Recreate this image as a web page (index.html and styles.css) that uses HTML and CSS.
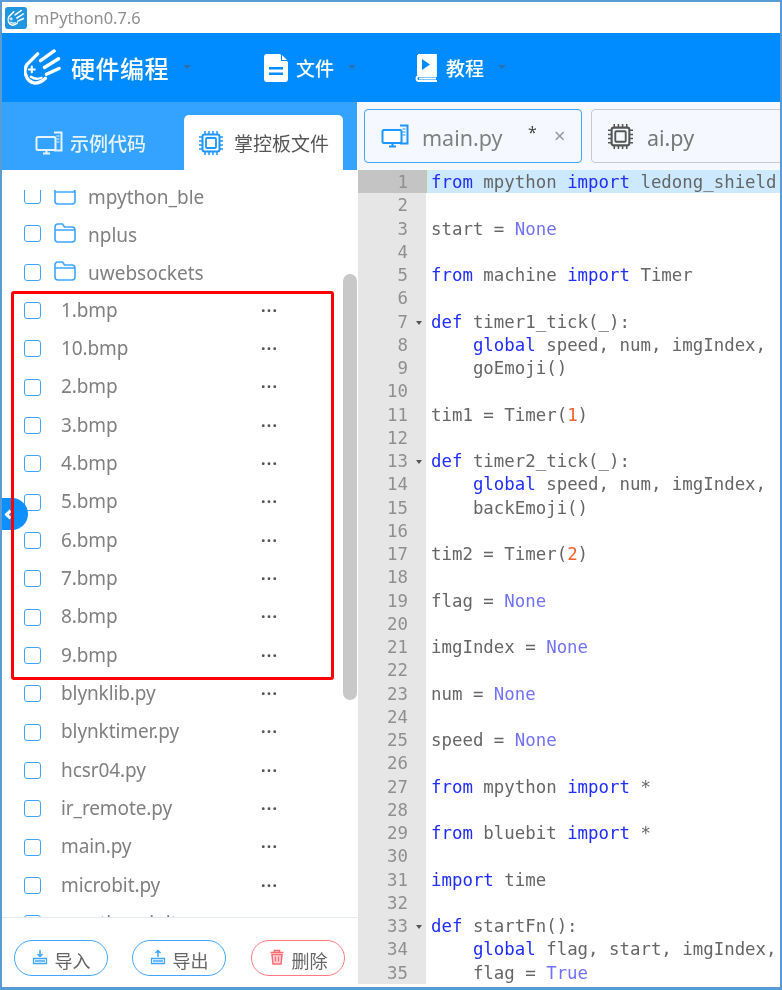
FILE: index.html
```html
<!DOCTYPE html>
<html lang="zh">
<head>
<meta charset="utf-8">
<title>mPython0.7.6</title>
<link rel="stylesheet" href="styles.css">
</head>
<body>
<svg class="defs" width="0" height="0">
  <defs>
    <symbol id="pc" viewBox="0 0 28 24">
      <path d="M19 1.5h7.5v18H19" fill="none" stroke="currentColor" stroke-width="2"/>
      <path d="M21.5 5h3M21.5 8h3M21.5 11h3" stroke="currentColor" stroke-width="1.2"/>
      <rect x="1.5" y="6" width="19" height="13" rx="1.5" fill="var(--pc-fill,none)" stroke="currentColor" stroke-width="2"/>
      <path d="M8 22.5h7M11.5 19v3" stroke="currentColor" stroke-width="2"/>
    </symbol>
    <symbol id="chip" viewBox="0 0 24 24">
      <rect x="3.5" y="3.5" width="17" height="17" rx="2" fill="none" stroke="currentColor" stroke-width="2"/>
      <rect x="7" y="7" width="10" height="10" rx="1" fill="none" stroke="currentColor" stroke-width="1.8"/>
      <path d="M6 0v3M10 0v3M14 0v3M18 0v3M6 21v3M10 21v3M14 21v3M18 21v3M0 6h3M0 10h3M0 14h3M0 18h3M21 6h3M21 10h3M21 14h3M21 18h3" stroke="currentColor" stroke-width="1.5"/>
    </symbol>
    <symbol id="folder" viewBox="0 0 22 20">
      <path d="M1 4.5Q1 1 4 1h4.5l2 3H18q3 0 3 3v9q0 3-3 3H4q-3 0-3-3z M1 7h20" fill="none" stroke="currentColor" stroke-width="1.6"/>
    </symbol>
    <symbol id="logo" viewBox="0 0 38 38">
      <g fill="none" stroke="currentColor" stroke-width="3.400" stroke-linecap="round">
        <path d="M17 12L31 2M21 19L35.500 10M23 26L36 20"/>
        <path d="M14 5L3 16Q0 21 1.500 26Q4 34 11 35Q17 35 22 30"/>
        <path d="M5 21h6M8 18v6" stroke-width="2.200"/>
        <path d="M7 28.500Q12 32 18 29.500" stroke-width="2.400"/>
      </g>
    </symbol>
    <symbol id="impbox" viewBox="0 0 16 16">
      <path d="M1.5 9.5h13v5h-13zM3 12h10" fill="none" stroke="currentColor" stroke-width="1.3"/>
    </symbol>
  </defs>
</svg>

<div class="app">
  <div class="titlebar">
    <svg class="title-icon" viewBox="0 0 22 22"><rect width="22" height="22" rx="3" fill="#2196e0"/><use href="#logo" x="2.5" y="2.5" width="17" height="17" color="#fff"/></svg>
    <span class="title-text">mPython0.7.6</span>
  </div>

  <header class="menubar">
    <div class="menu menu-brand">
      <svg class="brand-logo"><use href="#logo"/></svg>
      <span class="brand-name">硬件编程</span><i class="caret"></i>
    </div>
    <div class="menu menu-file">
      <svg class="menu-icon" viewBox="0 0 24 28"><path d="M3 0h13l8 8v17q0 3-3 3H3q-3 0-3-3V3q0-3 3-3z" fill="#fff"/><path d="M17 0l7 7h-7z" fill="#008cff"/><path d="M18 1l5 5h-5z" fill="#fff"/><path d="M5 13h14v2.400H5zM5 18.500h14v2.400H5z" fill="#008cff"/></svg>
      <span class="menu-label">文件</span><i class="caret"></i>
    </div>
    <div class="menu menu-tut">
      <svg class="menu-icon" viewBox="0 0 24 28"><path d="M4 0h18v22H5q-2.500 0-2.500 2.500T5 27h18" fill="none" stroke="#fff" stroke-width="1.800"/><path d="M3 1h19v20H3z" fill="#fff"/><path d="M8 5l8 5.500L8 16z" fill="#008cff"/><path d="M5 23.500h17v2H5z" fill="#fff"/></svg>
      <span class="menu-label">教程</span><i class="caret"></i>
    </div>
  </header>

  <div class="workspace">
    <aside class="sidebar">
      <div class="side-tabs">
        <div class="side-tab">
          <svg class="side-tab-icon"><use href="#pc"/></svg><span>示例代码</span>
        </div>
        <div class="side-tab side-tab-active">
          <svg class="side-tab-icon-chip"><use href="#chip"/></svg><span>掌控板文件</span>
        </div>
      </div>
      <div class="file-list">
        <ul class="files">
          <li class="file"><i class="check"></i><svg class="folder"><use href="#folder"/></svg><span class="folder-name">mpython_ble</span></li>
          <li class="file"><i class="check"></i><svg class="folder"><use href="#folder"/></svg><span class="folder-name">nplus</span></li>
          <li class="file"><i class="check"></i><svg class="folder"><use href="#folder"/></svg><span class="folder-name">uwebsockets</span></li>
          <li class="file"><i class="check"></i><span class="name">1.bmp</span><span class="more">···</span></li>
          <li class="file"><i class="check"></i><span class="name">10.bmp</span><span class="more">···</span></li>
          <li class="file"><i class="check"></i><span class="name">2.bmp</span><span class="more">···</span></li>
          <li class="file"><i class="check"></i><span class="name">3.bmp</span><span class="more">···</span></li>
          <li class="file"><i class="check"></i><span class="name">4.bmp</span><span class="more">···</span></li>
          <li class="file"><i class="check"></i><span class="name">5.bmp</span><span class="more">···</span></li>
          <li class="file"><i class="check"></i><span class="name">6.bmp</span><span class="more">···</span></li>
          <li class="file"><i class="check"></i><span class="name">7.bmp</span><span class="more">···</span></li>
          <li class="file"><i class="check"></i><span class="name">8.bmp</span><span class="more">···</span></li>
          <li class="file"><i class="check"></i><span class="name">9.bmp</span><span class="more">···</span></li>
          <li class="file"><i class="check"></i><span class="name">blynklib.py</span><span class="more">···</span></li>
          <li class="file"><i class="check"></i><span class="name">blynktimer.py</span><span class="more">···</span></li>
          <li class="file"><i class="check"></i><span class="name">hcsr04.py</span><span class="more">···</span></li>
          <li class="file"><i class="check"></i><span class="name">ir_remote.py</span><span class="more">···</span></li>
          <li class="file"><i class="check"></i><span class="name">main.py</span><span class="more">···</span></li>
          <li class="file"><i class="check"></i><span class="name">microbit.py</span><span class="more">···</span></li>
          <li class="file"><i class="check"></i><span class="name">mpython_init.py</span><span class="more">···</span></li>
        </ul>
        <div class="scrollbar"></div>
      </div>
      <div class="actions">
        <button class="pill"><svg class="pill-icon" viewBox="0 0 16 16"><use href="#impbox"/><path d="M8 1v6M5.500 5L8 7.500 10.500 5" fill="none" stroke="currentColor" stroke-width="1.500"/></svg><span>导入</span></button>
        <button class="pill"><svg class="pill-icon" viewBox="0 0 16 16"><use href="#impbox"/><path d="M8 8V2M5.500 4L8 1.500 10.500 4" fill="none" stroke="currentColor" stroke-width="1.500"/></svg><span>导出</span></button>
        <button class="pill pill-danger"><svg class="pill-icon" viewBox="0 0 16 16"><path d="M1.500 3.500h13M5.500 3V1.500h5V3" fill="none" stroke="currentColor" stroke-width="1.600"/><path d="M3 5.500h10L12 15H4z" fill="#ffd5d8" stroke="currentColor" stroke-width="1.500"/><path d="M6.500 7.500v5M9.500 7.500v5" stroke="currentColor" stroke-width="1.300"/></svg><span>删除</span></button>
      </div>
    </aside>

    <main class="editor">
      <div class="doc-tabs">
        <div class="doc-tab doc-tab-active">
          <svg class="doc-icon"><use href="#pc"/></svg>
          <span class="doc-name">main.py</span><span class="doc-star">*</span><span class="doc-close">×</span>
        </div>
        <div class="doc-tab">
          <svg class="doc-icon-chip"><use href="#chip"/></svg>
          <span class="doc-name">ai.py</span><span class="doc-star"></span><span class="doc-close">×</span>
        </div>
      </div>
      <div class="code">
        <div class="ln ln-active"><b class="num">1</b><code><k>from</k> mpython <k>import</k> ledong_shield</code></div>
        <div class="ln"><b class="num">2</b><code></code></div>
        <div class="ln"><b class="num">3</b><code>start = <c>None</c></code></div>
        <div class="ln"><b class="num">4</b><code></code></div>
        <div class="ln"><b class="num">5</b><code><k>from</k> machine <k>import</k> Timer</code></div>
        <div class="ln"><b class="num">6</b><code></code></div>
        <div class="ln"><b class="num fold">7</b><code><k>def</k> timer1_tick(_):</code></div>
        <div class="ln"><b class="num">8</b><code>    <k>global</k> speed, num, imgIndex, </code></div>
        <div class="ln"><b class="num">9</b><code>    goEmoji()</code></div>
        <div class="ln"><b class="num">10</b><code></code></div>
        <div class="ln"><b class="num">11</b><code>tim1 = Timer(<n>1</n>)</code></div>
        <div class="ln"><b class="num">12</b><code></code></div>
        <div class="ln"><b class="num fold">13</b><code><k>def</k> timer2_tick(_):</code></div>
        <div class="ln"><b class="num">14</b><code>    <k>global</k> speed, num, imgIndex, </code></div>
        <div class="ln"><b class="num">15</b><code>    backEmoji()</code></div>
        <div class="ln"><b class="num">16</b><code></code></div>
        <div class="ln"><b class="num">17</b><code>tim2 = Timer(<n>2</n>)</code></div>
        <div class="ln"><b class="num">18</b><code></code></div>
        <div class="ln"><b class="num">19</b><code>flag = <c>None</c></code></div>
        <div class="ln"><b class="num">20</b><code></code></div>
        <div class="ln"><b class="num">21</b><code>imgIndex = <c>None</c></code></div>
        <div class="ln"><b class="num">22</b><code></code></div>
        <div class="ln"><b class="num">23</b><code>num = <c>None</c></code></div>
        <div class="ln"><b class="num">24</b><code></code></div>
        <div class="ln"><b class="num">25</b><code>speed = <c>None</c></code></div>
        <div class="ln"><b class="num">26</b><code></code></div>
        <div class="ln"><b class="num">27</b><code><k>from</k> mpython <k>import</k> *</code></div>
        <div class="ln"><b class="num">28</b><code></code></div>
        <div class="ln"><b class="num">29</b><code><k>from</k> bluebit <k>import</k> *</code></div>
        <div class="ln"><b class="num">30</b><code></code></div>
        <div class="ln"><b class="num">31</b><code><k>import</k> time</code></div>
        <div class="ln"><b class="num">32</b><code></code></div>
        <div class="ln"><b class="num fold">33</b><code><k>def</k> startFn():</code></div>
        <div class="ln"><b class="num">34</b><code>    <k>global</k> flag, start, imgIndex, </code></div>
        <div class="ln"><b class="num">35</b><code>    flag = <c>True</c></code></div>
      </div>
    </main>
  </div>

  <div class="collapse-btn"><i class="collapse-arrow"></i></div>
  <div class="highlight-box"></div>
</div>
</body>
</html>
```

FILE: styles.css
```css
* { box-sizing: border-box; }
html, body { margin: 0; padding: 0; height: 100%; overflow: hidden; background: #fff; }
.defs { position: absolute; }
body { font-family: "Noto Sans", "Noto Sans CJK SC", sans-serif; }

.app {
  position: relative;
  width: 782px;
  height: 990px;
  border: 2px solid #5b9bd5;
  border-bottom-width: 3px;
  display: flex;
  flex-direction: column;
  overflow: hidden;
  background: #fff;
  filter: blur(0.35px);
}

.titlebar { height: 31px; display: flex; align-items: center; padding-left: 3px; background: #fff; flex: none; }
.title-icon { width: 22px; height: 22px; margin-right: 7px; }
.title-text { font-size: 16.400px; color: #8f8f8f; }

.menubar { height: 69px; flex: none; background: #008cff; display: flex; align-items: center; color: #fff; }
.menu { display: flex; align-items: center; }
.menu-brand { margin-left: 22px; width: 240px; }
.menu-file { width: 150px; }
.brand-logo { width: 37px; height: 37px; color: #fff; margin-right: 10px; }
.brand-name { font-size: 24px; font-family: "Noto Sans CJK SC", sans-serif; font-weight: 500; letter-spacing: 0.5px; line-height: 30px; }
.menu-icon { width: 24px; height: 28px; margin-right: 8px; }
.menu-label { font-size: 19px; font-family: "Noto Sans CJK SC", sans-serif; font-weight: 500; }
.caret { width: 0; height: 0; border: 4px solid transparent; border-top: 4px solid #2a6fb0; border-bottom-width: 0; margin-left: 14px; margin-top: -2px; }

.workspace { flex: 1; display: flex; min-height: 0; }

.sidebar { width: 355px; flex: none; display: flex; flex-direction: column; background: #fff; }
.side-tabs { height: 68px; flex: none; background: #33a3ff; display: flex; align-items: flex-end; }
.side-tab {
  height: 55px; display: flex; align-items: center; color: #e6f4ff;
  font-size: 19px; font-family: "Noto Sans CJK SC", sans-serif;
  width: 182px; padding-left: 33px; font-weight: 500;
}
.side-tab-icon { width: 28px; height: 24px; margin-right: 7px; color: #e6f4ff; }
.side-tab-active {
  width: 159px; background: #fff; color: #555; border-radius: 5px 5px 0 0;
  padding-left: 15px; font-weight: 400;
}
.side-tab-icon-chip { width: 24px; height: 24px; margin-right: 11px; color: #1e96ff; }

.file-list { position: relative; flex: 1; min-height: 0; overflow: hidden; margin-top: 20px; }
.files { list-style: none; margin: -13.500px 0 0; padding: 0; }
.file { height: 38.330px; display: flex; align-items: center; padding-left: 22px; color: #808080; font-size: 19px; }
.check { width: 17px; height: 17px; flex: none; border: 1.500px solid #3ea6ff; border-radius: 3px; background: #fff; }
.folder { width: 22px; height: 20px; margin-left: 13px; margin-top: -2px; color: #3ea6ff; flex: none; }
.folder-name { margin-left: 12px; line-height: 24px; margin-top: 2px; }
.name { margin-left: 20px; width: 200px; line-height: 24px; letter-spacing: -0.100px; margin-top: -2px; }
.more { color: #555; font-size: 16px; font-weight: 700; letter-spacing: 1.200px; margin-top: -2px; }
.scrollbar { position: absolute; left: 341px; top: 84px; width: 14px; height: 426px; border-radius: 7px; background: #c8c8c8; }

.actions {
  height: 70px; flex: none; border-top: 1px solid #e3ebf2; background: #fff;
  display: flex; gap: 24px; padding: 22px 0 0 12px; align-items: flex-start;
}
.pill {
  width: 94px; height: 36px; border: 1.500px solid #3ea6ff; border-radius: 18px; background: #fff;
  display: flex; align-items: center; justify-content: center; gap: 7px; padding: 0;
  color: #3ea6ff; font-family: "Noto Sans CJK SC", sans-serif; font-size: 18px;
}
.pill span { color: #666; margin-top: 3px; }
.pill-icon { width: 16px; height: 16px; margin-top: -2px; }
.pill-danger { border-color: #ff7a82; color: #ff6b74; margin-left: 1px; }

.editor { flex: 1; min-width: 0; display: flex; flex-direction: column; overflow: hidden; }
.doc-tabs { height: 68px; flex: none; background: #f5f9ff; display: flex; gap: 9px; padding: 7px 0 0 6px; align-items: flex-start; border-left: 1px solid #fff; }
.doc-tab {
  flex: none; width: 218px; height: 54px; display: flex; align-items: center;
  border: 1.500px solid #c9c9c9; border-radius: 4px; padding-left: 16px; color: #777; font-size: 21.500px;
}
.doc-tab-active { border-color: #3ea6ff; color: #808080; }
.doc-icon { width: 28px; height: 24px; color: #1e96ff; --pc-fill: #fff; margin-right: 13px; }
.doc-icon-chip { width: 25px; height: 25px; color: #555; margin-right: 14px; }
.doc-name { width: 106px; line-height: 28px; margin-top: 3px; }
.doc-star { width: 26px; font-size: 16px; color: #444; margin-top: -8px; }
.doc-close { font-size: 20px; color: #999; margin-top: -2px; }

.code { flex: 1; min-height: 0; overflow: hidden; background: #fff; font-family: "DejaVu Sans Mono", monospace; font-size: 17.400px; color: #666; }
.ln { height: 23.260px; display: flex; line-height: 25px; white-space: pre; }
.ln b, .ln code { font: inherit; }
.num { position: relative; flex: none; width: 68px; margin-left: 1px; background: #e6e6e6; color: #8f8f8f; text-align: right; padding-right: 18px; height: 23.260px; }
.ln code { padding-left: 5px; flex: 1; height: 23.260px; }
.ln-active .num { background: #c4c4c4; }
.ln-active code { background: #cce9ff; border-left: 1px solid #c9c98f; padding-left: 4px; }
.fold::after { content: ""; position: absolute; right: 4px; top: 11px; border: 3.500px solid transparent; border-top: 4px solid #555; border-bottom-width: 0; }
k { color: #1f2dff; }
c { color: #7272f7; }
n { color: #f0622a; }

.collapse-btn {
  position: absolute; left: -2px; top: 496px; width: 28px; height: 32px;
  background: #0d8fff; border-radius: 0 16px 16px 0; display: flex; align-items: center; padding-left: 6px;
}
.collapse-arrow { width: 7px; height: 7px; border-left: 3px solid #fff; border-bottom: 3px solid #fff; transform: rotate(45deg); }
.highlight-box { position: absolute; left: 9px; top: 289px; width: 323px; height: 389px; border: 3px solid #ff0000; border-radius: 3px; }
```
